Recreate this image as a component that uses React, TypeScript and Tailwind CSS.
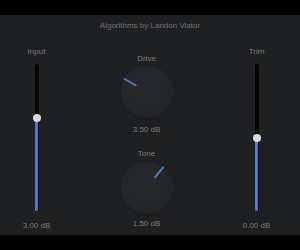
const blue = "#4f78c6";

type SliderProps = { label: string; value: string; thumbTop: number };

const VSlider = ({ label, value, thumbTop }: SliderProps) => (
  <div className="flex flex-col items-center pt-[32px]">
    <span className="h-[10px] text-[8px] leading-[10px] text-[#7a7b7d]">{label}</span>
    <div className="relative mt-[7px] h-[147px] w-[4px] rounded-full bg-[#050505]">
      <div
        className="absolute bottom-0 left-[0.5px] w-[3px] rounded-b-full bg-[#4f78c6]"
        style={{ top: thumbTop }}
      />
      <div
        className="absolute left-[-2px] h-[8px] w-[8px] rounded-full bg-[#d9dadc]"
        style={{ top: thumbTop - 4 }}
      />
    </div>
    <span className="mt-[10px] h-[10px] text-[8px] leading-[10px] text-[#7a7b7d]">{value}</span>
  </div>
);

type KnobProps = { inner: [number, number]; outer: [number, number] };

const Knob = ({ inner, outer }: KnobProps) => (
  <svg width="56" height="56" viewBox="-1 -1 56 56" className="block">
    <defs>
      <radialGradient id="kg" cx="0.5" cy="0.45" r="0.55">
        <stop offset="0%" stopColor="#28292b" />
        <stop offset="85%" stopColor="#252628" />
        <stop offset="100%" stopColor="#202123" />
      </radialGradient>
    </defs>
    <circle cx="27" cy="27.5" r="27" fill="#18191a" opacity="0.6" />
    <circle cx="27" cy="27" r="26.5" fill="url(#kg)" />
    <line x1={inner[0]} y1={inner[1]} x2={outer[0]} y2={outer[1]} stroke={blue} strokeWidth="2" strokeLinecap="round" />
  </svg>
);

export default function App() {
  return (
    <div className="flex h-[250px] w-[300px] flex-col bg-black font-['Liberation_Sans',Arial,sans-serif]">
      <div className="h-[15px]" />
      <div className="relative h-[220px] bg-[#1f2022]">
        <p className="pt-[6px] text-center text-[8px] leading-[10px] text-[#707173]">Algorithms by Landon Viator</p>
        <div className="absolute inset-0 grid grid-cols-[73px_147px_73px]">
          <VSlider label="Input" value="3.00 dB" thumbTop={54} />
          <div className="flex flex-col items-center pt-[39px]">
            <span className="h-[10px] text-[8px] leading-[10px] text-[#7a7b7d]">Drive</span>
            <div className="mt-[0px]">
              <Knob inner={[15.6, 20.3]} outer={[4.6, 14]} />
            </div>
            <span className="mt-[5px] h-[10px] text-[8px] leading-[10px] text-[#7a7b7d]">3.50 dB</span>
            <span className="mt-[14px] h-[10px] text-[8px] leading-[10px] text-[#7a7b7d]">Tone</span>
            <div className="mt-[1px]">
              <Knob inner={[35, 16.3]} outer={[43, 6.3]} />
            </div>
            <span className="mt-[3px] h-[10px] text-[8px] leading-[10px] text-[#7a7b7d]">1.50 dB</span>
          </div>
          <VSlider label="Trim" value="0.00 dB" thumbTop={74} />
        </div>
      </div>
      <div className="h-[15px]" />
    </div>
  );
}
